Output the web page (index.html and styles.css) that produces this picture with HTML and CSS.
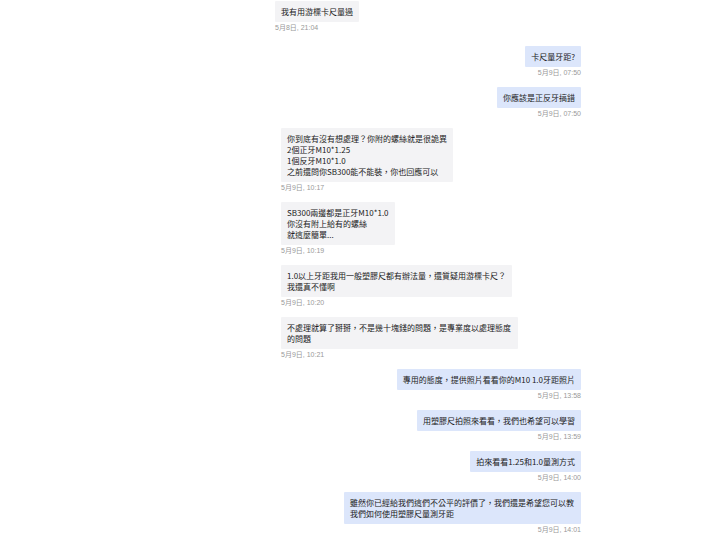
FILE: index.html
```html
<!DOCTYPE html>
<html lang="zh-Hant">
<head>
  <meta charset="UTF-8">
  <meta name="viewport" content="width=device-width, initial-scale=1.0">
  <link rel="stylesheet" href="styles.css">
  <title>聊天記錄</title>
</head>
<body>
  <div class="chat">
    <div class="msg msg-in msg-first">
      <div class="bubble">我有用游標卡尺量過</div>
      <div class="time">5月8日, 21:04</div>
    </div>
    <div class="msg msg-out">
      <div class="bubble">卡尺量牙距?</div>
      <div class="time">5月9日, 07:50</div>
    </div>
    <div class="msg msg-out">
      <div class="bubble">你應該是正反牙搞錯</div>
      <div class="time">5月9日, 07:50</div>
    </div>
    <div class="msg msg-in">
      <div class="bubble">你到底有沒有想處理？你附的螺絲就是很詭異<br>2個正牙M10*1.25<br>1個反牙M10*1.0<br>之前還問你SB300能不能裝，你也回應可以</div>
      <div class="time">5月9日, 10:17</div>
    </div>
    <div class="msg msg-in">
      <div class="bubble">SB300兩邊都是正牙M10*1.0<br>你沒有附上給有的螺絲<br>就這麼簡單...</div>
      <div class="time">5月9日, 10:19</div>
    </div>
    <div class="msg msg-in">
      <div class="bubble">1.0以上牙距我用一般塑膠尺都有辦法量，還質疑用游標卡尺？<br>我還真不懂啊</div>
      <div class="time">5月9日, 10:20</div>
    </div>
    <div class="msg msg-in">
      <div class="bubble">不處理就算了掰掰，不是幾十塊錢的問題，是專業度以處理態度的問題</div>
      <div class="time">5月9日, 10:21</div>
    </div>
    <div class="msg msg-out">
      <div class="bubble">專用的態度，提供照片看看你的M10 1.0牙距照片</div>
      <div class="time">5月9日, 13:58</div>
    </div>
    <div class="msg msg-out">
      <div class="bubble">用塑膠尺拍照來看看，我們也希望可以學習</div>
      <div class="time">5月9日, 13:59</div>
    </div>
    <div class="msg msg-out">
      <div class="bubble">拍來看看1.25和1.0量測方式</div>
      <div class="time">5月9日, 14:00</div>
    </div>
    <div class="msg msg-out">
      <div class="bubble">雖然你已經給我們這們不公平的評價了，我們還是希望您可以教我們如何使用塑膠尺量測牙距</div>
      <div class="time">5月9日, 14:01</div>
    </div>
  </div>
</body>
</html>
```
FILE: styles.css
```css
body {
  margin: 0;
  background: #ffffff;
  font-family: 'Noto Sans CJK TC', 'Noto Sans', sans-serif;
}

.chat {
  width: 300px;
  margin-left: 281px;
  padding-top: 1px;
  display: flex;
  flex-direction: column;
}

.msg {
  display: flex;
  flex-direction: column;
  margin-bottom: 10px;
}

.msg-in {
  align-items: flex-start;
}

.msg-out {
  align-items: flex-end;
}

.msg-first {
  margin-left: -6px;
  margin-bottom: 14px;
}

.bubble {
  box-sizing: border-box;
  max-width: 237px;
  padding: 5px 6px;
  font-size: 8px;
  line-height: 11px;
  color: #222;
  border-radius: 1px;
}

.msg-in .bubble {
  background-color: #f3f3f5;
}

.msg-out .bubble {
  background-color: #dce6fb;
}

.time {
  margin-top: 1px;
  font-family: 'Liberation Sans', 'Noto Sans CJK TC', sans-serif;
  font-size: 7px;
  line-height: 9px;
  color: #999;
}
```
